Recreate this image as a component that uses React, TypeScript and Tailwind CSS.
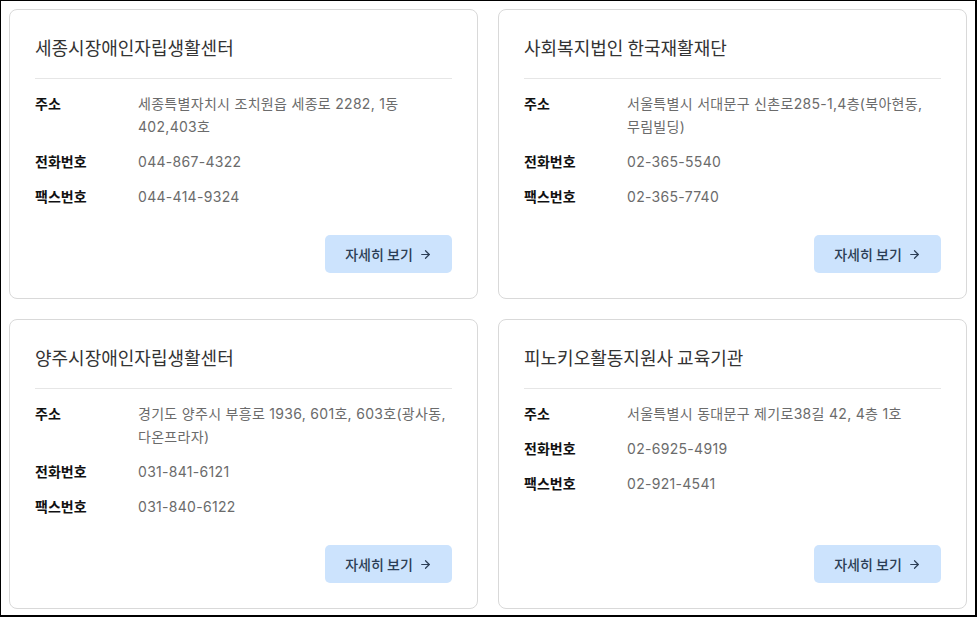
import { ArrowRight } from 'lucide-react'

interface Center {
  name: string
  address: string
  phone: string
  fax: string
}

const CENTERS: Center[] = [
  {
    name: '세종시장애인자립생활센터',
    address: '세종특별자치시 조치원읍 세종로 2282, 1동 402,403호',
    phone: '044-867-4322',
    fax: '044-414-9324',
  },
  {
    name: '사회복지법인 한국재활재단',
    address: '서울특별시 서대문구 신촌로285-1,4층(북아현동, 무림빌딩)',
    phone: '02-365-5540',
    fax: '02-365-7740',
  },
  {
    name: '양주시장애인자립생활센터',
    address: '경기도 양주시 부흥로 1936, 601호, 603호(광사동, 다온프라자)',
    phone: '031-841-6121',
    fax: '031-840-6122',
  },
  {
    name: '피노키오활동지원사 교육기관',
    address: '서울특별시 동대문구 제기로38길 42, 4층 1호',
    phone: '02-6925-4919',
    fax: '02-921-4541',
  },
]

function InfoRow({ label, value }: { label: string; value: string }) {
  return (
    <div className="flex">
      <dt className="w-[103px] shrink-0 text-[14px] font-bold text-[#111]">{label}</dt>
      <dd
        className="flex-1 break-keep text-[14px] tracking-[0.3px] text-[#6b6b6b]"
        style={{ fontFamily: 'Inter, "Noto Sans CJK KR", sans-serif' }}
      >
        {value}
      </dd>
    </div>
  )
}

function CenterCard({ center }: { center: Center }) {
  return (
    <div className="flex flex-col rounded-lg border border-[#d9d9d9] bg-white px-[25px] pt-[23px] pb-[25px]">
      <h2 className="pb-[17px] text-[18px] leading-[28px] text-[#333]">{center.name}</h2>
      <div className="border-t border-[#e6e6e6]" />
      <dl className="mt-[13px] flex flex-col gap-3 leading-[23px]">
        <InfoRow label="주소" value={center.address} />
        <InfoRow label="전화번호" value={center.phone} />
        <InfoRow label="팩스번호" value={center.fax} />
      </dl>
      <div className="mt-auto flex justify-end pt-[27px]">
        <button className="flex h-[38px] w-[127px] items-center justify-center gap-1.5 rounded-[5px] bg-[#cce3fd] text-[14px] font-medium text-[#2c3e55]">
          자세히 보기
          <ArrowRight size={13} strokeWidth={2.2} />
        </button>
      </div>
    </div>
  )
}

export default function App() {
  return (
    <div
      className="h-[617px] w-[977px] overflow-hidden border-t border-l border-r-2 border-b-2 border-black bg-white"
      style={{ fontFamily: '"Noto Sans CJK KR", "Noto Sans", sans-serif' }}
    >
      <div className="grid grid-cols-2 gap-5 p-2">
        {CENTERS.map((c) => (
          <CenterCard key={c.name} center={c} />
        ))}
      </div>
    </div>
  )
}
